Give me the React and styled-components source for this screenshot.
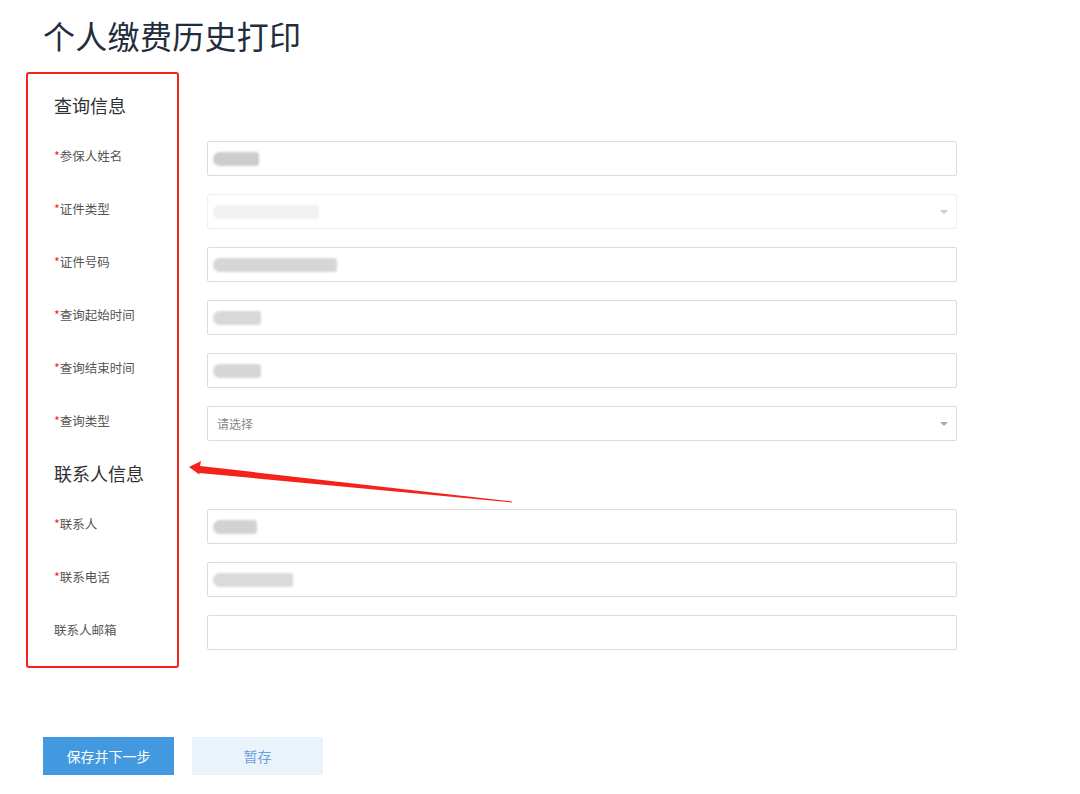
import React from "react";
import styled, { createGlobalStyle } from "styled-components";

const Global = createGlobalStyle`
  html, body { margin: 0; padding: 0; background: #fff; }
  body { font-family: "Microsoft YaHei", "Noto Sans CJK SC", "Liberation Sans", sans-serif; }
  * { box-sizing: border-box; }
`;

const Page = styled.div`
  position: relative;
  width: 1080px;
  height: 794px;
  padding: 15px 0 0 43px;
  overflow: hidden;
`;

const Title = styled.h1`
  margin: 0;
  font-size: 32px;
  line-height: 40px;
  font-weight: 400;
  color: #1f2d3d;
  letter-spacing: 0.3px;
`;

const Form = styled.div`
  padding: 38px 0 0 11px;
  width: 914px;
`;

const SectionTitle = styled.h2`
  margin: ${(p) => (p.$first ? "0" : "20px")} 0 24px;
  font-size: 18px;
  line-height: 24px;
  font-weight: 400;
  color: #303133;
`;

const Row = styled.div`
  display: grid;
  grid-template-columns: 153px 750px;
  align-items: center;
  height: 35px;
  margin-bottom: 18px;
`;

const Label = styled.label`
  font-size: 12.5px;
  color: #555;
  margin-top: -7px;
`;

const Star = styled.span`
  color: #f5222d;
`;

const Field = styled.div`
  position: relative;
  height: 35px;
  border: 1px solid ${(p) => (p.$disabled ? "#efefef" : "#dcdcdc")};
  border-radius: 2px;
  background: #fff;
  display: flex;
  align-items: center;
  padding: 0 4px;
`;

const Placeholder = styled.span`
  font-size: 12px;
  color: #888;
  padding-left: 5px;
`;

const Blur = styled.span`
  display: inline-block;
  height: 14px;
  width: ${(p) => p.$w}px;
  border-radius: 7px 3px 3px 7px;
  background: ${(p) => p.$c};
  filter: blur(1.2px);
  margin: 1px 0 0 1px;
`;

const Caret = styled.span`
  position: absolute;
  right: 8px;
  top: 50%;
  margin-top: -2px;
  width: 0;
  height: 0;
  border-left: 4px solid transparent;
  border-right: 4px solid transparent;
  border-top: 4px solid ${(p) => (p.$light ? "#ccc" : "#aaa")};
`;

const Buttons = styled.div`
  display: flex;
  gap: 18px;
  margin-top: 87px;
`;

const Button = styled.button`
  width: 131px;
  height: 38px;
  border: none;
  border-radius: 0;
  font-family: inherit;
  font-size: 14px;
  background: ${(p) => (p.$primary ? "#4299e0" : "#eaf3fc")};
  color: ${(p) => (p.$primary ? "#fff" : "#6aa0dc")};
  cursor: pointer;
`;

const Annotation = styled.div`
  position: absolute;
  left: 26px;
  top: 72px;
  width: 153px;
  height: 596px;
  border: 2.5px solid #f5221b;
  border-radius: 3px;
  pointer-events: none;
`;

const Arrow = styled.svg`
  position: absolute;
  left: 0;
  top: 0;
  pointer-events: none;
`;

const rows1 = [
  { label: "参保人姓名", req: true, blur: [46, "#cdcdcd"] },
  { label: "证件类型", req: true, blur: [106, "#f1f1f1"], select: true, disabled: true },
  { label: "证件号码", req: true, blur: [124, "#d6d6d6"] },
  { label: "查询起始时间", req: true, blur: [48, "#d8d8d8"] },
  { label: "查询结束时间", req: true, blur: [48, "#d6d6d6"] },
  { label: "查询类型", req: true, placeholder: "请选择", select: true },
];

const rows2 = [
  { label: "联系人", req: true, blur: [44, "#d2d2d2"] },
  { label: "联系电话", req: true, blur: [80, "#dadada"] },
  { label: "联系人邮箱", req: false },
];

function FormRow({ r }) {
  return (
    <Row>
      <Label>
        {r.req && <Star>*</Star>}
        {r.label}
      </Label>
      <Field $disabled={r.disabled}>
        {r.blur && <Blur $w={r.blur[0]} $c={r.blur[1]} />}
        {r.placeholder && <Placeholder>{r.placeholder}</Placeholder>}
        {r.select && <Caret $light={r.disabled} />}
      </Field>
    </Row>
  );
}

export default function App() {
  return (
    <>
      <Global />
      <Page>
        <Title>个人缴费历史打印</Title>
        <Form>
          <SectionTitle $first>查询信息</SectionTitle>
          {rows1.map((r) => (
            <FormRow key={r.label} r={r} />
          ))}
          <SectionTitle>联系人信息</SectionTitle>
          {rows2.map((r) => (
            <FormRow key={r.label} r={r} />
          ))}
        </Form>
        <Buttons>
          <Button $primary>保存并下一步</Button>
          <Button>暂存</Button>
        </Buttons>
        <Annotation />
        <Arrow width="1080" height="794" viewBox="0 0 1080 794">
          <polygon
            points="189,467 201,461 200,466 512,501.5 512,502.5 199,473 200,475"
            fill="#f5221b"
          />
        </Arrow>
      </Page>
    </>
  );
}
